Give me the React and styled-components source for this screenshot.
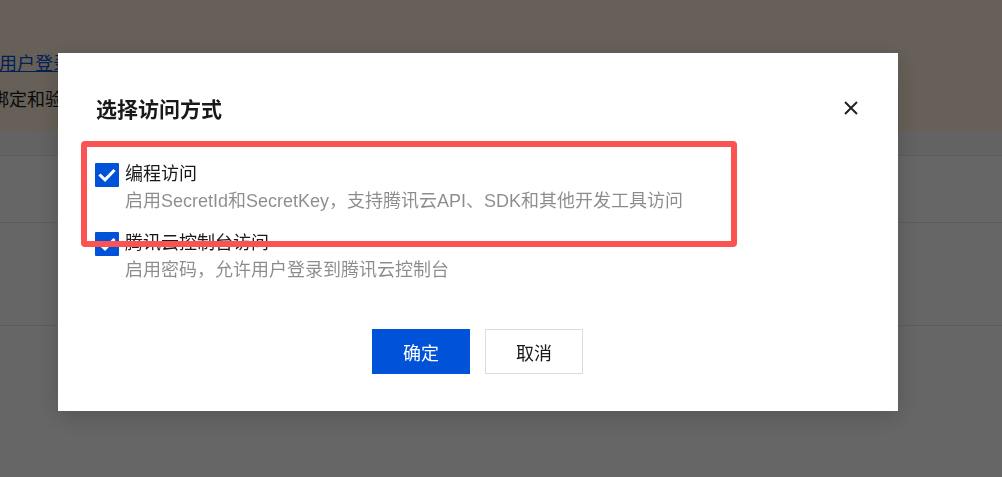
import React from "react";
import styled, { createGlobalStyle } from "styled-components";

const Global = createGlobalStyle`
  html, body { margin: 0; padding: 0; }
  body {
    width: 1002px;
    height: 477px;
    overflow: hidden;
    background: #ffffff;
    font-family: "Liberation Sans", "Noto Sans CJK SC", sans-serif;
  }
`;

const Page = styled.div`
  width: 1002px;
  height: 477px;
  display: flex;
  flex-direction: column;
`;

const Banner = styled.div`
  height: 131px;
  background: #fff0dc;
  display: flex;
  flex-direction: column;
  padding-top: 50px;
  box-sizing: border-box;
  gap: 8px;
  font-size: 18px;
  line-height: 28px;
  color: #1a1a1a;
`;

const BannerLine = styled.div`
  margin-left: ${(p) => p.$shift}px;
  white-space: nowrap;
`;

const Link = styled.a`
  color: #0052d9;
  text-decoration: underline;
`;

const TableHead = styled.div`
  height: 24px;
  background: #f7f7f7;
  border-bottom: 1px solid #e6e6e6;
`;

const TableRow = styled.div`
  height: ${(p) => p.$h}px;
  border-bottom: 1px solid #e6e6e6;
`;

const Overlay = styled.div`
  position: fixed;
  inset: 0;
  background: rgba(0, 0, 0, 0.6);
  display: flex;
  align-items: flex-start;
`;

const Dialog = styled.div`
  position: relative;
  margin: 53px 0 0 58px;
  width: 840px;
  height: 358px;
  box-sizing: border-box;
  background: #ffffff;
  padding: 40px 39px 37px 38px;
  display: flex;
  flex-direction: column;
  box-shadow: 0 6px 24px rgba(0, 0, 0, 0.18);
`;

const Header = styled.div`
  display: flex;
  align-items: center;
  justify-content: space-between;
  height: 30px;
`;

const Title = styled.div`
  font-family: "Noto Sans CJK SC", sans-serif;
  font-size: 21px;
  font-weight: 700;
  line-height: 30px;
  color: rgba(0, 0, 0, 0.9);
`;

const CloseBtn = styled.button`
  border: none;
  background: none;
  padding: 0;
  width: 16px;
  height: 16px;
  display: flex;
  align-items: center;
  justify-content: center;
  cursor: pointer;
`;

const Options = styled.div`
  margin-top: 38px;
  margin-left: -1px;
  display: flex;
  flex-direction: column;
  gap: 15px;
`;

const Option = styled.div`
  display: flex;
  align-items: flex-start;
`;

const Box = styled.span`
  width: 24px;
  height: 24px;
  margin-top: 1.5px;
  flex: none;
  background: #0052d9;
  border-radius: 1px;
  display: flex;
  align-items: center;
  justify-content: center;
`;

const OptionText = styled.div`
  margin-left: 6px;
  display: flex;
  flex-direction: column;
`;

const Label = styled.div`
  font-size: 18px;
  line-height: 27px;
  color: rgba(0, 0, 0, 0.9);
`;

const Desc = styled.div`
  font-size: 18px;
  line-height: 27px;
  color: rgba(0, 0, 0, 0.45);
  white-space: nowrap;
`;

const Footer = styled.div`
  margin-top: auto;
  display: flex;
  justify-content: center;
  gap: 15px;
`;

const Button = styled.button`
  width: 98px;
  height: 45px;
  box-sizing: border-box;
  font-family: "Noto Sans CJK SC", sans-serif;
  font-size: 18px;
  border: 1px solid ${(p) => (p.$primary ? "#0052d9" : "#dcdcdc")};
  background: ${(p) => (p.$primary ? "#0052d9" : "#ffffff")};
  color: ${(p) => (p.$primary ? "#ffffff" : "rgba(0,0,0,0.9)")};
  cursor: pointer;
`;

const Highlight = styled.div`
  position: absolute;
  left: 23px;
  top: 88px;
  width: 656px;
  height: 106px;
  box-sizing: border-box;
  border: 6px solid #fa5352;
  border-radius: 4px;
  pointer-events: none;
`;

const Check = () => (
  <svg width="24" height="24" viewBox="0 0 24 24">
    <path d="M5.5 12.5 L10 16.8 L18.5 8" fill="none" stroke="#fff" strokeWidth="3" strokeLinecap="square" />
  </svg>
);

const options = [
  { label: "编程访问", desc: "启用SecretId和SecretKey，支持腾讯云API、SDK和其他开发工具访问" },
  { label: "腾讯云控制台访问", desc: "启用密码，允许用户登录到腾讯云控制台" },
];

export default function App() {
  return (
    <>
      <Global />
      <Page>
        <Banner>
          <BannerLine $shift={-1}>
            <Link href="#">用户登录</Link>
          </BannerLine>
          <BannerLine $shift={-9}>绑定和验证</BannerLine>
        </Banner>
        <TableHead />
        <TableRow $h={66} />
        <TableRow $h={102} />
      </Page>
      <Overlay>
        <Dialog>
          <Header>
            <Title>选择访问方式</Title>
            <CloseBtn aria-label="关闭">
              <svg width="16" height="16" viewBox="0 0 16 16">
                <path d="M2 2 L14 14 M14 2 L2 14" stroke="#222" strokeWidth="2" fill="none" />
              </svg>
            </CloseBtn>
          </Header>
          <Options>
            {options.map((o) => (
              <Option key={o.label}>
                <Box>
                  <Check />
                </Box>
                <OptionText>
                  <Label>{o.label}</Label>
                  <Desc>{o.desc}</Desc>
                </OptionText>
              </Option>
            ))}
          </Options>
          <Footer>
            <Button $primary>确定</Button>
            <Button>取消</Button>
          </Footer>
          <Highlight />
        </Dialog>
      </Overlay>
    </>
  );
}
